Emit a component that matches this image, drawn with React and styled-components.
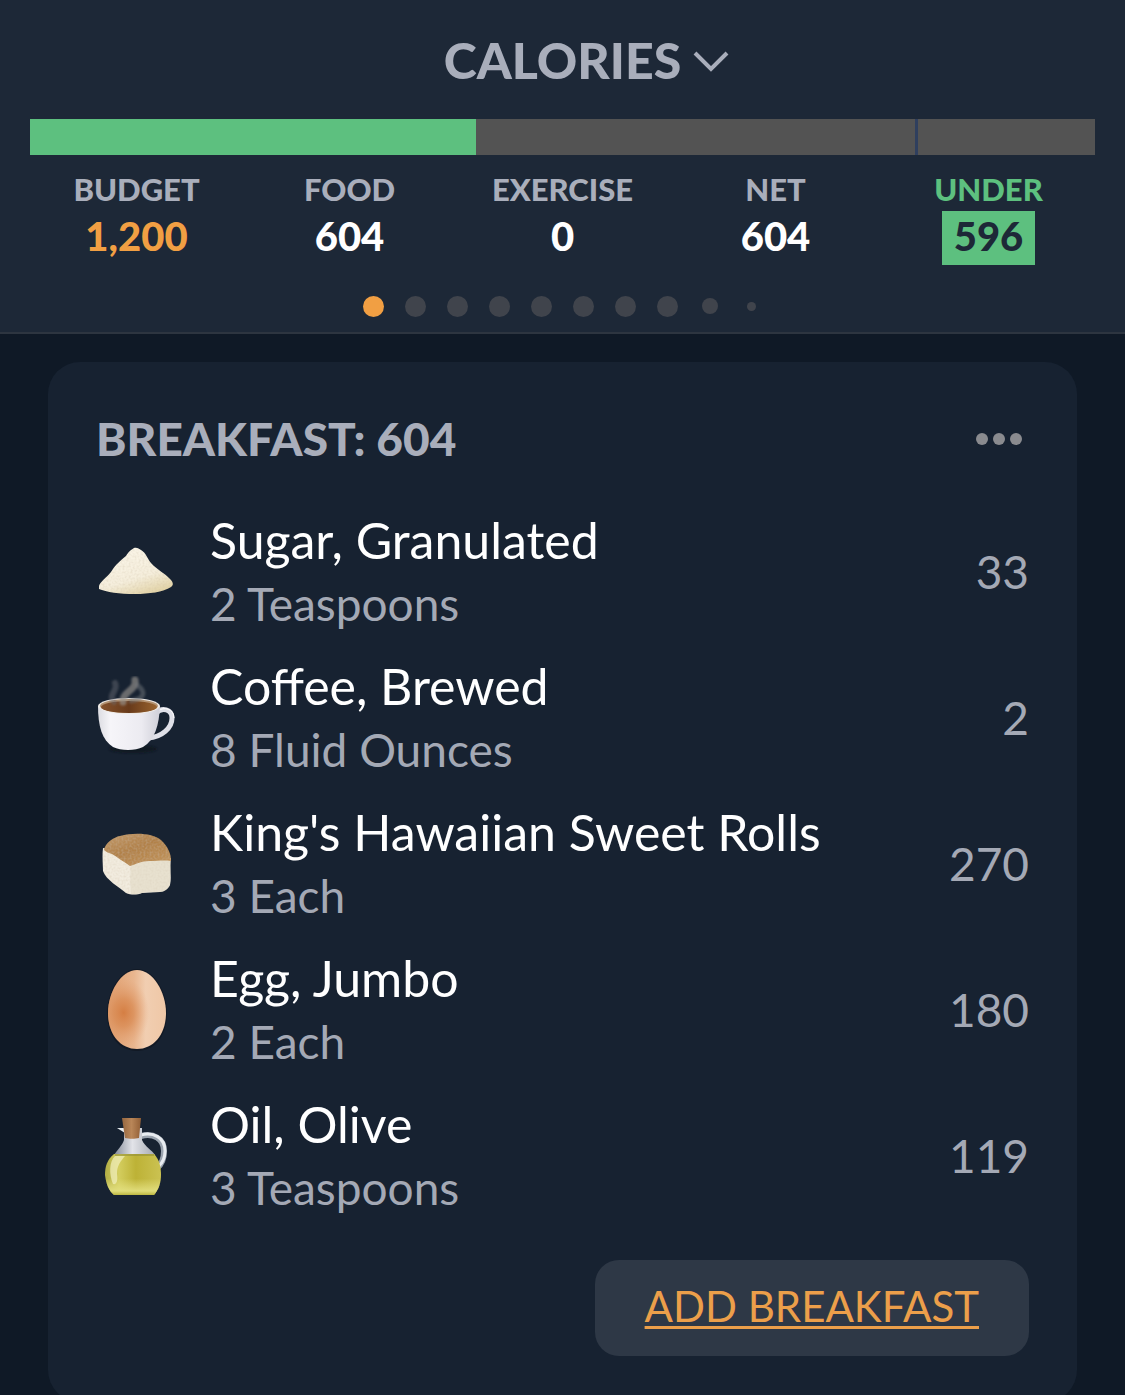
import React from "react";
import styled, { createGlobalStyle } from "styled-components";

const GlobalStyle = createGlobalStyle`
  *, *::before, *::after { box-sizing: border-box; }
  body {
    margin: 0;
    background: #0f1926;
    color: #ffffff;
    font-family: Lato, "Open Sans", "Liberation Sans", sans-serif;
  }
  button { font: inherit; border: 0; cursor: pointer; }
`;

const Screen = styled.div`
  display: flex;
  flex-direction: column;
  height: 100vh;
  overflow: hidden;
`;

const Header = styled.header`
  flex: none;
  padding: 29px 30px 5px;
  background: #1d2837;
  border-bottom: 2px solid #2d3540;
`;

const TitleButton = styled.button`
  display: grid;
  grid-template-columns: 1fr auto 1fr;
  align-items: center;
  column-gap: 12px;
  width: 100%;
  height: 62px;
  padding: 0;
  background: none;
  color: #a9aebb;
`;

const TitleText = styled.span`
  grid-column: 2;
  font-size: 50px;
  line-height: 62px;
  font-weight: 900;
`;

const Chevron = styled.svg`
  width: 36px;
  height: 24px;
`;

const Bar = styled.div`
  display: flex;
  height: 36px;
  margin-top: 28px;
  background: #535353;
`;

const BarPart = styled.div`
  flex: ${(p) => p.$share} 0 0;
  background: ${(p) => (p.$filled ? "#5dc07f" : "transparent")};
  border-right: ${(p) => (p.$marker ? "3px solid #2f3f5e" : "0")};
`;

const Summary = styled.dl`
  display: grid;
  grid-template-columns: repeat(5, 1fr);
  margin: 16px 0 0;
`;

const Stat = styled.div`
  display: flex;
  flex-direction: column;
  align-items: center;
`;

const StatLabel = styled.dt`
  margin-bottom: 4px;
  font-size: 31px;
  line-height: 36px;
  font-weight: 900;
  color: ${(p) => p.$color || "#a9aebb"};
`;

const StatValue = styled.dd`
  margin: 0;
  padding: 0 12px 4px;
  font-size: 40px;
  line-height: 50px;
  font-weight: 900;
  color: ${(p) => p.$color || "#ffffff"};
  background: ${(p) => p.$background || "transparent"};
`;

const Pager = styled.nav`
  display: flex;
  justify-content: center;
  margin-top: 20px;
`;

const PageButton = styled.button`
  display: grid;
  place-items: center;
  width: 42px;
  height: 42px;
  padding: 0;
  background: none;

  &::before {
    content: "";
    width: ${(p) => p.$size}px;
    height: ${(p) => p.$size}px;
    border-radius: 50%;
    background: ${(p) => (p.$active ? "#f19f43" : "#40444c")};
  }
`;

const Card = styled.section`
  flex: none;
  margin: 28px 48px 0;
  padding: 46px 48px;
  border-radius: 32px;
  background: #172231;
`;

const CardHeader = styled.div`
  display: flex;
  align-items: center;
  justify-content: space-between;
  height: 62px;
`;

const CardTitle = styled.h2`
  margin: 0;
  font-size: 46px;
  line-height: 62px;
  font-weight: 900;
  color: #a9aebb;
`;

const MoreButton = styled.button`
  display: flex;
  gap: 5px;
  padding: 12px 7px;
  background: none;
`;

const MoreDot = styled.span`
  width: 12px;
  height: 12px;
  border-radius: 50%;
  background: #8a8b8f;
`;

const FoodList = styled.ul`
  margin: 29px 0 0;
  padding: 0;
  list-style: none;
`;

const FoodRow = styled.li`
  display: grid;
  grid-template-columns: 80px 1fr auto;
  column-gap: 34px;
  align-items: center;
  height: 146px;
`;

const FoodIcon = styled.svg`
  width: 80px;
  height: 84px;
`;

const FoodName = styled.div`
  font-size: 50px;
  line-height: 64px;
`;

const FoodAmount = styled.div`
  font-size: 46px;
  line-height: 64px;
  color: #a4a9b5;
`;

const FoodValue = styled.div`
  font-size: 46px;
  line-height: 64px;
  color: #a4a9b5;
`;

const CardFooter = styled.div`
  display: flex;
  justify-content: flex-end;
  margin-top: 31px;
`;

const AddButton = styled.button`
  height: 96px;
  padding: 0 50px 4px;
  border-radius: 24px;
  background: #2e3846;
  color: #ec9f4a;
  font-size: 42px;
  text-decoration: underline;
  text-decoration-thickness: 3px;
  text-underline-offset: 4px;
`;

const SugarIcon = () => (
  <FoodIcon viewBox="-1 0 80 84" aria-hidden="true">
    <defs>
      <linearGradient id="sugar" x1="0.2" y1="0" x2="0.7" y2="1">
        <stop offset="0" stopColor="#fbf6ea" />
        <stop offset="0.65" stopColor="#f5eedc" />
        <stop offset="1" stopColor="#e2d3a6" />
      </linearGradient>
      <filter id="grain" x="0" y="0" width="1" height="1">
        <feTurbulence type="fractalNoise" baseFrequency="0.5" numOctaves="2" seed="4" />
        <feColorMatrix values="0 0 0 0 0.6  0 0 0 0 0.5  0 0 0 0 0.35  0 0 0 0.7 -0.27" />
        <feComposite in2="SourceGraphic" operator="in" />
        <feBlend in2="SourceGraphic" mode="normal" />
      </filter>
    </defs>
    <path
      d="M2 56 C3 52 9 48 14 42 C19 34 23 31 29 26 C32 21 34 20 37 18 C40 17 42 19 44 20 C49 23 50 28 54 33 C60 40 68 43 73 49 C76 52 77 55 74 57 C66 62 52 64 38 64 C23 64 9 62 2 59 Z"
      fill="url(#sugar)"
      filter="url(#grain)"
    />
  </FoodIcon>
);

const CoffeeIcon = () => (
  <FoodIcon viewBox="-1 0 80 84" aria-hidden="true">
    <defs>
      <linearGradient id="cup" x1="0" x2="1" y1="0" y2="0">
        <stop offset="0" stopColor="#dcdce2" />
        <stop offset="0.2" stopColor="#f6f5f9" />
        <stop offset="0.7" stopColor="#ecebf1" />
        <stop offset="1" stopColor="#cfcfd8" />
      </linearGradient>
      <linearGradient id="brew" x1="0" x2="1">
        <stop offset="0" stopColor="#85522c" />
        <stop offset="0.5" stopColor="#683a1a" />
        <stop offset="1" stopColor="#9a642f" />
      </linearGradient>
      <filter id="steam" x="-0.3" y="-0.3" width="1.6" height="1.6">
        <feGaussianBlur stdDeviation="1" />
      </filter>
    </defs>
    <ellipse cx="36" cy="73" rx="24" ry="4" fill="#0c131d" opacity="0.7" filter="url(#steam)" />
    <path
      d="M59 37 C65 31 75 33 75 42 C75 52 65 61 51 62"
      fill="none"
      stroke="#dfe0e8"
      strokeWidth="5"
      strokeLinecap="round"
    />
    <path d="M61 35 C67 30 77 33 77 42" fill="none" stroke="#ffffff" strokeWidth="1" />
    <path d="M1 30 C1 50 5 64 16 71 C24 75 38 75 46 71 C58 64 62 49 63 30 Z" fill="url(#cup)" />
    <ellipse cx="32" cy="30" rx="31" ry="8" fill="#eeeae6" />
    <ellipse cx="32" cy="30" rx="29" ry="7" fill="#b39271" />
    <ellipse cx="32" cy="31" rx="28" ry="6" fill="url(#brew)" />
    <g filter="url(#steam)" fill="none" strokeLinecap="round">
      <path d="M17 26 C10 19 22 14 18 7" stroke="#6c6f76" strokeWidth="6" opacity="0.45" />
      <path d="M26 26 C25 15 40 15 38 4" stroke="#96928e" strokeWidth="7" opacity="0.65" />
      <path d="M34 25 C51 22 47 14 40 9" stroke="#74777e" strokeWidth="5" opacity="0.5" />
    </g>
  </FoodIcon>
);

const RollIcon = () => (
  <FoodIcon viewBox="-2 0 80 84" aria-hidden="true">
    <defs>
      <linearGradient id="crust" x1="0" x2="0.8" y1="0" y2="1">
        <stop offset="0" stopColor="#c29a6c" />
        <stop offset="0.5" stopColor="#b18149" />
        <stop offset="1" stopColor="#c09259" />
      </linearGradient>
    </defs>
    <path
      d="M5 26 C4 34 5 43 5 49 C8 58 21 65 28 71 C33 73 39 73 44 71 L62 70 C66 70 70 67 72 63 C74 54 71 45 73 36 L40 32 Z"
      fill="#f2ecdf"
      filter="url(#grain)"
    />
    <path d="M33 41 C32 52 32 63 33 72 C39 73 42 71 48 70 L63 70 C68 69 71 66 72 62 L73 36 Z" fill="#ded5bf" opacity="0.5" />
    <path
      d="M6 28 C7 21 16 15 22 14 C36 10 55 11 63 18 C70 25 73 31 73 39 C66 38 60 39 51 39 C44 39 38 42 32 44 C26 40 19 35 14 32 C11 31 8 30 6 28 Z"
      fill="url(#crust)"
      filter="url(#grain)"
    />
  </FoodIcon>
);

const EggIcon = () => (
  <FoodIcon viewBox="-2 0 80 84" aria-hidden="true">
    <defs>
      <linearGradient id="shell">
        <stop offset="0" stopColor="#e0a071" />
        <stop offset="0.45" stopColor="#e9b68f" />
        <stop offset="0.65" stopColor="#f1ceb1" />
        <stop offset="1" stopColor="#efc7a6" />
      </linearGradient>
      <radialGradient id="shade" cx="0.27" cy="0.54" r="0.44">
        <stop offset="0" stopColor="#d57e43" />
        <stop offset="0.4" stopColor="#d98a52" stopOpacity="0.75" />
        <stop offset="1" stopColor="#e3a071" stopOpacity="0" />
      </radialGradient>
    </defs>
    <path d="M39 1 C56 1 69 24 69 45 C69 68 57 83 39 83 C21 83 9 68 9 45 C9 24 22 1 39 1 Z" fill="#121925" />
    <path d="M39 2 C55 2 68 24 68 45 C68 66 56 81 39 81 C22 81 10 66 10 45 C10 24 23 2 39 2 Z" fill="url(#shell)" />
    <path d="M39 2 C55 2 68 24 68 45 C68 66 56 81 39 81 C22 81 10 66 10 45 C10 24 23 2 39 2 Z" fill="url(#shade)" />
  </FoodIcon>
);

const OilIcon = () => (
  <FoodIcon viewBox="-9 0 80 84" aria-hidden="true">
    <defs>
      <linearGradient id="oil" x1="0" x2="1">
        <stop offset="0" stopColor="#b1ad45" />
        <stop offset="0.25" stopColor="#d3cd5e" />
        <stop offset="0.55" stopColor="#bdb236" />
        <stop offset="1" stopColor="#cbc252" />
      </linearGradient>
      <linearGradient id="glow" x1="0" x2="0" y1="0" y2="1">
        <stop offset="0.6" stopColor="#e6e384" stopOpacity="0" />
        <stop offset="0.9" stopColor="#e3e080" stopOpacity="0.9" />
        <stop offset="1" stopColor="#bcb640" />
      </linearGradient>
      <linearGradient id="glass" x1="0" x2="1">
        <stop offset="0" stopColor="#848b98" />
        <stop offset="0.45" stopColor="#e2e3e8" />
        <stop offset="1" stopColor="#a5a9b2" />
      </linearGradient>
      <linearGradient id="cork" x1="0" x2="1">
        <stop offset="0" stopColor="#966740" />
        <stop offset="0.5" stopColor="#b98658" />
        <stop offset="1" stopColor="#925f36" />
      </linearGradient>
    </defs>
    <path d="M36 22 C48 19 59 24 59 37 C59 45 57 50 52 54" fill="none" stroke="#9aa3ae" strokeWidth="6" />
    <path d="M36 21 C48 18 60 23 60 37 C60 43 58 48 54 52" fill="none" stroke="#e8ecf0" strokeWidth="3" />
    <path d="M12 14 L20 14 L20 19 Z" fill="#e9edf1" />
    <path d="M19 14 L19 26 C17 32 12 36 9 41 L50 41 C47 36 40 33 37 26 L37 14 Z" fill="url(#glass)" />
    <path d="M9 40 C2 46 0 52 0 61 C1 70 4 77 9 81 L49 81 C54 75 56 68 56 61 C56 52 54 45 49 40 Z" fill="url(#oil)" />
    <path d="M9 40 C2 46 0 52 0 61 C1 70 4 77 9 81 L49 81 C54 75 56 68 56 61 C56 52 54 45 49 40 Z" fill="url(#glow)" />
    <path d="M10 41 L49 41" stroke="#8a8734" strokeWidth="1" />
    <path d="M10 42 C4 48 4 60 8 70 C12 71 13 66 12 60 C12 51 16 47 20 42 Z" fill="#f0eeba" opacity="0.75" />
    <path d="M17 4 L36 4 L34 24 C30 25 24 25 20 24 Z" fill="url(#cork)" />
  </FoodIcon>
);

const stats = [
  { label: "BUDGET", value: "1,200", color: "#f19f43" },
  { label: "FOOD", value: "604" },
  { label: "EXERCISE", value: "0" },
  { label: "NET", value: "604" },
  { label: "UNDER", value: "596", color: "#1d2837", labelColor: "#5dc07f", background: "#5dc07f" },
];

const pages = [21, 21, 21, 21, 21, 21, 21, 21, 16, 9];

const foods = [
  { name: "Sugar, Granulated", amount: "2 Teaspoons", calories: 33, Icon: SugarIcon },
  { name: "Coffee, Brewed", amount: "8 Fluid Ounces", calories: 2, Icon: CoffeeIcon },
  { name: "King's Hawaiian Sweet Rolls", amount: "3 Each", calories: 270, Icon: RollIcon },
  { name: "Egg, Jumbo", amount: "2 Each", calories: 180, Icon: EggIcon },
  { name: "Oil, Olive", amount: "3 Teaspoons", calories: 119, Icon: OilIcon },
];

export default function App() {
  return (
    <>
      <GlobalStyle />
      <Screen>
        <Header>
          <TitleButton type="button">
            <TitleText>CALORIES</TitleText>
            <Chevron viewBox="0 0 36 24" aria-hidden="true">
              <path d="M2 5 L18 21 L34 5" fill="none" stroke="#a9aebb" strokeWidth="4" />
            </Chevron>
          </TitleButton>
          <Bar>
            <BarPart $share={447} $filled />
            <BarPart $share={441} $marker />
            <BarPart $share={177} />
          </Bar>
          <Summary>
            {stats.map((s) => (
              <Stat key={s.label}>
                <StatLabel $color={s.labelColor}>{s.label}</StatLabel>
                <StatValue $color={s.color} $background={s.background}>{s.value}</StatValue>
              </Stat>
            ))}
          </Summary>
          <Pager aria-label="Nutrients">
            {pages.map((size, i) => (
              <PageButton key={i} type="button" aria-label={`Page ${i + 1}`} $size={size} $active={i === 0} />
            ))}
          </Pager>
        </Header>
        <Card>
          <CardHeader>
            <CardTitle>BREAKFAST: 604</CardTitle>
            <MoreButton type="button" aria-label="More">
              <MoreDot />
              <MoreDot />
              <MoreDot />
            </MoreButton>
          </CardHeader>
          <FoodList>
            {foods.map(({ name, amount, calories, Icon }) => (
              <FoodRow key={name}>
                <Icon />
                <div>
                  <FoodName>{name}</FoodName>
                  <FoodAmount>{amount}</FoodAmount>
                </div>
                <FoodValue>{calories}</FoodValue>
              </FoodRow>
            ))}
          </FoodList>
          <CardFooter>
            <AddButton type="button">ADD BREAKFAST</AddButton>
          </CardFooter>
        </Card>
      </Screen>
    </>
  );
}
